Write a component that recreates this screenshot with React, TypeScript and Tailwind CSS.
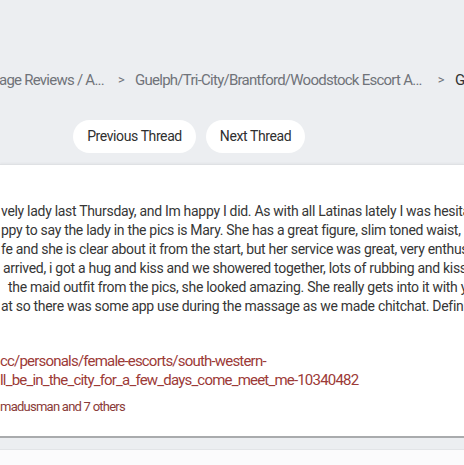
import React from "react";

const bodyLines: { text: string; pad: string }[] = [
  { text: "vely lady last Thursday, and Im happy I did. As with all Latinas lately I was hesitant", pad: "pl-[1px]" },
  { text: "ppy to say the lady in the pics is Mary. She has a great figure, slim toned waist, nice", pad: "pl-[1px]" },
  { text: "fe and she is clear about it from the start, but her service was great, very enthusiastic", pad: "pl-[1px]" },
  { text: "arrived, i got a hug and kiss and we showered together, lots of rubbing and kissing", pad: "pl-[3px]" },
  { text: "the maid outfit from the pics, she looked amazing. She really gets into it with you", pad: "pl-[8px]" },
  { text: "at so there was some app use during the massage as we made chitchat. Definitely", pad: "pl-[1px]" },
];

const App: React.FC = () => {
  return (
    <div className="w-[464px] h-[465px] overflow-hidden bg-[#eceef1] font-['Roboto','Liberation_Sans',sans-serif]">
      {/* breadcrumb */}
      <div className="h-[57px]" />
      <div className="flex items-center h-[46px] whitespace-nowrap text-[15px] tracking-[-0.75px] text-[#707379] overflow-hidden">
        <span className="-ml-[1px]">age Reviews / A...</span>
        <span className="ml-[14px] text-[13px]">&gt;</span>
        <span className="ml-[11px]">Guelph/Tri-City/Brantford/Woodstock Escort A...</span>
        <span className="ml-[16px] text-[13px]">&gt;</span>
        <span className="ml-[11px] text-[#333]">G</span>
      </div>

      {/* thread nav */}
      <div className="flex gap-[10px] pl-[73px] pt-[17px]">
        <button className="h-[33px] w-[123px] rounded-full bg-white text-[14px] tracking-[-0.4px] text-[#2f2f2f]">
          Previous Thread
        </button>
        <button className="h-[33px] w-[99px] rounded-full bg-white text-[14px] tracking-[-0.4px] text-[#2f2f2f]">
          Next Thread
        </button>
      </div>

      {/* post card */}
      <div className="mt-[11px] bg-white border-t border-[#dfe1e4] shadow-[0_-1px_2px_rgba(0,0,0,0.04)] border-b-2 border-b-[#a9abad] h-[274px] overflow-hidden">
        <div className="pt-[37px] text-[14px] leading-[19px] tracking-[-0.3px] text-[#363636] whitespace-nowrap">
          {bodyLines.map((l, i) => (
            <div key={i} className={l.pad}>
              {l.text}
            </div>
          ))}
        </div>
        <div className="mt-[36px] text-[15px] leading-[19px] tracking-[-0.8px] text-[#9c3a37] whitespace-nowrap">
          <div>cc/personals/female-escorts/south-western-</div>
          <div>ll_be_in_the_city_for_a_few_days_come_meet_me-10340482</div>
        </div>
        <div className="mt-[7px] text-[13px] tracking-[-0.75px] text-[#8a3b38] whitespace-nowrap">madusman and 7 others</div>
      </div>
      <div className="h-[12px] bg-[#eceef1] border-b border-[#e2e4e7]" />
      <div className="h-[20px] bg-[#fbfbfc]" />
    </div>
  );
};

export default App;
